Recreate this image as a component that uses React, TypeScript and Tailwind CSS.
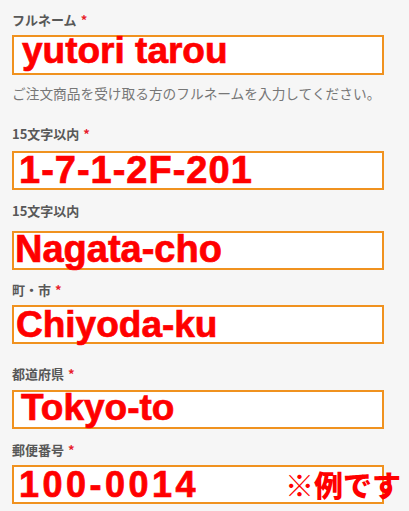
const jp = "font-['Noto_Sans_CJK_JP',sans-serif]";
const red = "font-['Liberation_Sans',Arial,sans-serif] font-bold text-[#ff0000] leading-none whitespace-nowrap [-webkit-text-stroke:0.7px_#ff0000]";

function Label({ text, required }: { text: string; required?: boolean }) {
  return (
    <div className={`${jp} text-[13px] font-bold leading-4 text-[#585858]`}>
      {text}
      {required && <span className="ml-1 text-[#e8202a]">*</span>}
    </div>
  );
}

export default function App() {
  return (
    <div className="min-h-[511px] w-[409px] overflow-hidden bg-[#f6f6f6] px-[12px] pt-[12px]">
      <Label text="フルネーム" required />
      <div className="mt-[7px] h-[40px] w-[372px] border-2 border-[#f0921f] bg-white">
        <div className={`${red} -mt-[5px] pl-[8px] text-[37px]`}>yutori tarou</div>
      </div>
      <p className={`${jp} mt-[9px] whitespace-nowrap text-[13.7px] leading-[18px] text-[#777777]`}>
        ご注文商品を受け取る方のフルネームを入力してください。
      </p>

      <div className="mt-[24px]">
        <Label text="15文字以内" required />
      </div>
      <div className="mt-[9px] h-[39px] w-[372px] border-2 border-[#f0921f] bg-white">
        <div className={`${red} -mt-[2px] pl-[5px] text-[38px] tracking-[1px]`}>1-7-1-2F-201</div>
      </div>

      <div className="mt-[13px]">
        <Label text="15文字以内" />
      </div>
      <div className="mt-[12px] h-[39px] w-[372px] border-2 border-[#f0921f] bg-white">
        <div className={`${red} -mt-[3px] pl-[1px] text-[38px]`}>Nagata-cho</div>
      </div>

      <div className="mt-[12px]">
        <Label text="町・市" required />
      </div>
      <div className="mt-[7px] h-[39px] w-[372px] border-2 border-[#f0921f] bg-white">
        <div className={`${red} -mt-[1px] pl-[2px] text-[37px]`}>Chiyoda-ku</div>
      </div>

      <div className="mt-[22px]">
        <Label text="都道府県" required />
      </div>
      <div className="mt-[8px] h-[39px] w-[372px] border-2 border-[#f0921f] bg-white">
        <div className={`${red} -mt-[3px] pl-[7px] text-[37px]`}>Tokyo-to</div>
      </div>

      <div className="mt-[13px]">
        <Label text="郵便番号" required />
      </div>
      <div className="relative mt-[7px] h-[39px] w-[372px] border-2 border-[#f0921f] bg-white">
        <div className={`${red} pl-[5px] text-[36px] tracking-[3.5px]`}>100-0014</div>
        <div className={`${jp} absolute left-[271px] top-[-2px] whitespace-nowrap text-[29px] font-black leading-[38px] text-[#ff0000]`}>
          ※例です
        </div>
      </div>
    </div>
  );
}
